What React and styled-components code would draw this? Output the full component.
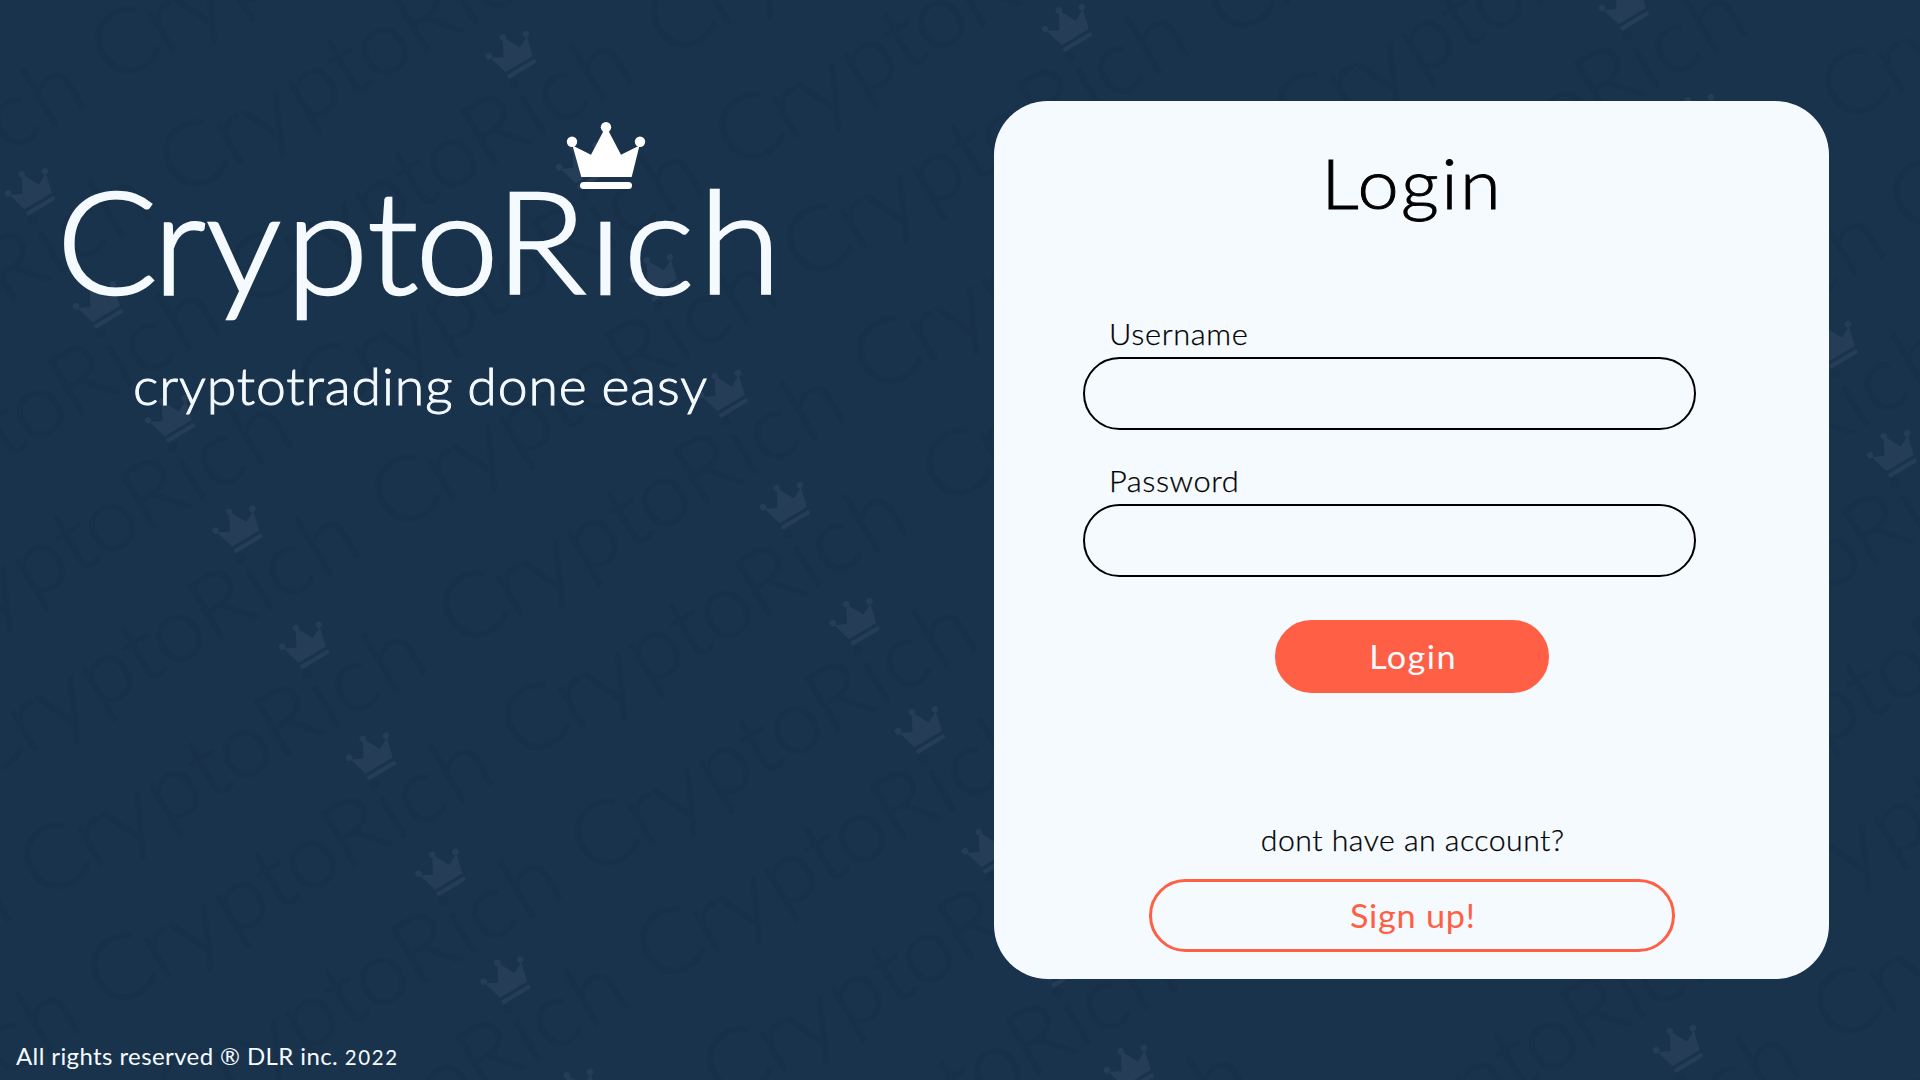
import React from 'react';
import styled, { createGlobalStyle } from 'styled-components';

const colors = {
  navy: '#1a334c',
  watermark: '#183149',
  watermarkCrown: '#263d58',
  paper: '#f5faff',
  coral: '#ff5f45',
};

const GlobalStyle = createGlobalStyle`
  *, *::before, *::after { box-sizing: border-box; }
  body {
    margin: 0;
    background: ${colors.navy};
    font-family: Lato, 'Open Sans', sans-serif;
    overflow: hidden;
  }
`;

const Page = styled.div`
  position: relative;
  display: grid;
  grid-template-columns: 994px 835px;
  grid-template-rows: 1fr auto;
  width: 1920px;
  height: 1080px;
  overflow: hidden;
  background: ${colors.navy};
`;

const Backdrop = styled.svg`
  position: absolute;
  inset: 0;
  width: 100%;
  height: 100%;
`;

const Brand = styled.header`
  position: relative;
  display: flex;
  flex-direction: column;
  align-items: flex-start;
  padding: 122px 0 0 64px;
`;

const Logo = styled.svg`
  display: block;
  width: 716px;
  height: 210px;
  overflow: visible;
`;

const WordmarkText = styled.text`
  font-family: Lato, 'Open Sans', sans-serif;
  font-weight: 300;
  font-size: 142px;
  stroke-width: 2.6px;
`;

const Tagline = styled.p`
  margin: 23px 0 0 69px;
  font-size: 51px;
  font-weight: 300;
  line-height: 61px;
  letter-spacing: 0.85px;
  word-spacing: -1.5px;
  white-space: nowrap;
  color: ${colors.paper};
  transform: scaleX(1.05);
  transform-origin: left;
  -webkit-text-stroke: 0.9px ${colors.paper};
`;

const Card = styled.main`
  position: relative;
  display: flex;
  flex-direction: column;
  align-items: center;
  height: 878px;
  margin-top: 101px;
  padding: 40px 0 0 1px;
  border-radius: 54px;
  background: ${colors.paper};
  color: #000;
`;

const Title = styled.h1`
  margin: 0;
  padding-left: 1px;
  font-size: 68.5px;
  font-weight: 300;
  line-height: 83px;
  letter-spacing: 2.2px;
  transform: scaleX(1.08);
  -webkit-text-stroke: 0.9px #000;
`;

const Fields = styled.div`
  display: flex;
  flex-direction: column;
  align-self: flex-start;
  gap: 34px;
  margin: 93px 0 43px 88px;
`;

const Field = styled.label`
  display: flex;
  flex-direction: column;
  gap: 5px;
`;

const Caption = styled.span`
  align-self: flex-start;
  margin-left: 25.5px;
  font-size: 28.8px;
  font-weight: 300;
  line-height: 35px;
  letter-spacing: ${(p) => p.$spacing}px;
  transform: scaleX(1.07);
  transform-origin: left;
  -webkit-text-stroke: 0.25px #000;
`;

const Input = styled.input`
  width: 613px;
  height: 73px;
  padding: 0 28px;
  border: 2px solid #000;
  border-radius: 37px;
  outline: none;
  background: transparent;
  font: 300 28px Lato, sans-serif;
`;

const Button = styled.button`
  width: ${(p) => (p.$outlined ? 526 : 274)}px;
  height: 73px;
  padding: 0 0 0 2px;
  border: 3px solid ${colors.coral};
  border-radius: 37px;
  background: ${(p) => (p.$outlined ? 'transparent' : colors.coral)};
  color: ${(p) => (p.$outlined ? colors.coral : colors.paper)};
  font-family: inherit;
  font-size: 32px;
  font-weight: 400;
  line-height: 38px;
  letter-spacing: ${(p) => (p.$outlined ? 0.7 : 1.3)}px;
`;

const ButtonLabel = styled.span`
  display: inline-block;
  transform: scaleX(1.07);
`;

const Prompt = styled.p`
  margin: 130px 0 21px;
  padding-left: 2px;
  font-size: 28.8px;
  font-weight: 300;
  line-height: 35px;
  letter-spacing: 0.45px;
  transform: scaleX(1.05);
  -webkit-text-stroke: 0.25px #000;
`;

const Footer = styled.footer`
  position: relative;
  padding: 0 0 8px 16px;
  font-size: 24px;
  line-height: 30px;
  letter-spacing: 0.4px;
  color: ${colors.paper};
`;

const Year = styled.span`
  font-size: 20.5px;
  letter-spacing: 1.6px;
`;

// Pen positions of each letter of the wordmark.
const LETTERS = [54, 145.7, 196.4, 272.3, 349.8, 395.7, 471.9, 560.7, 594, 665.7].join(' ');

function Wordmark({ text, color }) {
  return (
    <WordmarkText x={LETTERS} y="0" transform="scale(1.05 1)" fill={color} stroke={color}>
      {text}
    </WordmarkText>
  );
}

function Crown({ fill }) {
  return (
    <g fill={fill}>
      <circle cx="5" cy="19.7" r="5.2" />
      <circle cx="39" cy="5.2" r="5.2" />
      <circle cx="73" cy="19.7" r="5.2" />
      <path d="M5.5 23.5 L24 32.7 L37 8 H41 L54 32.7 L72.5 23.5 L64.7 55 H14.3 Z" />
      <rect x="13" y="60" width="52" height="7" rx="3.5" />
    </g>
  );
}

// Crown centres of the repeated watermark, column by column.
const MARKS = [
  [-111, 893], [-42, 1005],
  [-37, 80], [30, 192], [98, 305], [170, 419], [237.5, 529.5], [304, 645.5], [371, 756.5], [440.5, 872.5], [505.5, 980.5], [575, 1093],
  [375, -170], [443, -57], [511, 55], [581, 166], [655, 278], [723, 394], [785, 506], [854.5, 622], [920, 730], [987, 850], [1055, 964], [1129, 1069],
  [931, -196], [999, -84], [1067, 28], [1137, 140], [1206, 252], [1610, 937], [1678, 1049],
  [1490, -216], [1557, -105], [1624, 7], [1696, 118], [1763, 230], [1833, 345], [1892, 454], [1961, 566], [2029, 678], [2097, 790], [2165, 902],
  [2105, -129], [2173, -18],
];

function Watermark() {
  return (
    <Backdrop viewBox="0 0 1920 1080" aria-hidden="true">
      {MARKS.map(([x, y]) => (
        <g key={`${x},${y}`} transform={`translate(${x} ${y}) rotate(-30.8)`}>
          <g transform="translate(-352 85.5) scale(0.628) translate(-64 0)">
            <Wordmark text="CryptoRich" color={colors.watermark} />
          </g>
          <g transform="translate(2 -1.5) scale(0.63) translate(-39 -33.5)">
            <Crown fill={colors.watermarkCrown} />
          </g>
        </g>
      ))}
    </Backdrop>
  );
}

export default function App() {
  return (
    <>
      <GlobalStyle />
      <Page>
        <Watermark />
        <Brand>
          <Logo viewBox="64 122 716 210">
            <g transform="translate(0 294)">
              <Wordmark text="CryptoRıch" color={colors.paper} />
            </g>
            <g transform="translate(567 122)">
              <Crown fill="#fff" />
            </g>
          </Logo>
          <Tagline>cryptotrading done easy</Tagline>
        </Brand>
        <Card>
          <Title>Login</Title>
          <Fields>
            <Field>
              <Caption $spacing={0.6}>Username</Caption>
              <Input type="text" />
            </Field>
            <Field>
              <Caption $spacing={0.5}>Password</Caption>
              <Input type="password" />
            </Field>
          </Fields>
          <Button>
            <ButtonLabel>Login</ButtonLabel>
          </Button>
          <Prompt>dont have an account?</Prompt>
          <Button $outlined>
            <ButtonLabel>Sign up!</ButtonLabel>
          </Button>
        </Card>
        <Footer>
          All rights reserved ® DLR inc. <Year>2022</Year>
        </Footer>
      </Page>
    </>
  );
}
